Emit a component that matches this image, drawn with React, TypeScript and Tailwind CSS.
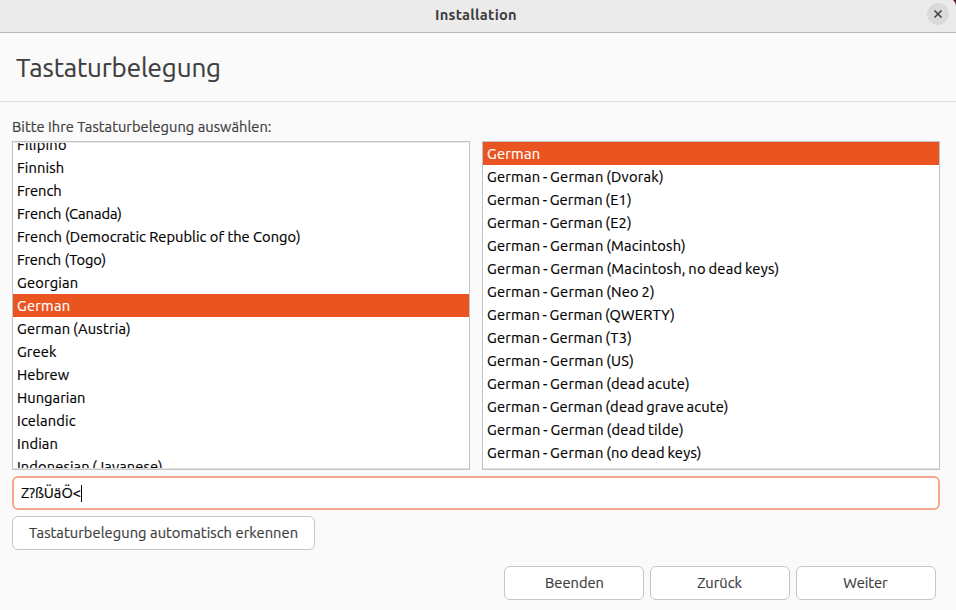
type Row = { label: string; fit?: string; selected?: boolean };

const layouts: Row[] = [
  { label: "Filipino", fit: "tracking-[0.25px]" },
  { label: "Finnish", fit: "tracking-[0.15px]" },
  { label: "French" },
  { label: "French (Canada)", fit: "tracking-[-0.03px]" },
  { label: "French (Democratic Republic of the Congo)", fit: "tracking-[0.03px]" },
  { label: "French (Togo)", fit: "tracking-[-0.08px]" },
  { label: "Georgian", fit: "tracking-[0.2px]" },
  { label: "German", fit: "tracking-[0.25px]", selected: true },
  { label: "German (Austria)", fit: "tracking-[0.25px] [word-spacing:-1px]" },
  { label: "Greek", fit: "tracking-[0.15px]" },
  { label: "Hebrew", fit: "tracking-[0.05px]" },
  { label: "Hungarian", fit: "tracking-[0.05px]" },
  { label: "Icelandic", fit: "tracking-[0.15px]" },
  { label: "Indian", fit: "tracking-[0.15px]" },
  { label: "Indonesian (Javanese)", fit: "tracking-[0.12px] [word-spacing:-1px]" },
];

const variantFit = "tracking-[0.25px] [word-spacing:-1px]";

const variants: Row[] = [
  { label: "German", fit: "tracking-[0.25px]", selected: true },
  { label: "German - German (Dvorak)", fit: variantFit },
  { label: "German - German (E1)", fit: "tracking-[0.2px] [word-spacing:-1px]" },
  { label: "German - German (E2)", fit: "tracking-[0.2px] [word-spacing:-1px]" },
  { label: "German - German (Macintosh)", fit: variantFit },
  { label: "German - German (Macintosh, no dead keys)", fit: "tracking-[0.27px] [word-spacing:-1px]" },
  { label: "German - German (Neo 2)", fit: variantFit },
  { label: "German - German (QWERTY)", fit: "tracking-[0.18px] [word-spacing:-1px]" },
  { label: "German - German (T3)", fit: "tracking-[0.2px] [word-spacing:-1px]" },
  { label: "German - German (US)", fit: variantFit },
  { label: "German - German (dead acute)", fit: variantFit },
  { label: "German - German (dead grave acute)", fit: "tracking-[0.2px] [word-spacing:-1px]" },
  { label: "German - German (dead tilde)", fit: "tracking-[0.28px] [word-spacing:-1px]" },
  { label: "German - German (no dead keys)", fit: variantFit },
];

function ListBox({ rows, scrolled }: { rows: Row[]; scrolled?: boolean }) {
  return (
    <div className="relative h-[329px] w-[458px] overflow-hidden border border-[#c3c3c3] bg-white">
      <ul className={scrolled ? "-mt-[9px]" : ""}>
        {rows.map((row) => (
          <li
            key={row.label}
            className={`h-[23px] pl-1 leading-[23px] whitespace-pre ${row.selected ? "bg-[#e95420] text-white" : "text-black"}`}
          >
            <span className={row.fit ?? ""}>{row.label}</span>
          </li>
        ))}
      </ul>
      {scrolled && <div className="absolute inset-x-0 top-0 h-px bg-[#e8e8e8]" />}
      <div className="absolute inset-x-0 bottom-0 h-px bg-[#e3e3e3]" />
    </div>
  );
}

function Button({ label, size, fit = "" }: { label: string; size: string; fit?: string }) {
  return (
    <button className={`flex h-[34px] items-center justify-center rounded-md border border-[#c6c6c6] bg-white whitespace-nowrap ${size}`}>
      <span className={fit}>{label}</span>
    </button>
  );
}

export default function App() {
  return (
    <div className="flex h-[610px] w-[956px] flex-col overflow-hidden bg-[#fafafa] font-['Ubuntu','Noto_Sans',sans-serif] text-[14.667px] text-[#3d3d3d] [-webkit-text-stroke:0.2px]">
      <header className="relative flex h-[33px] shrink-0 items-center justify-center border-b border-[#b8b8b8] bg-[#ebebeb] pb-[3px]">
        <h1 className="pr-1 font-bold tracking-[0.25px] [-webkit-text-stroke:0px]">Installation</h1>
        <button className="absolute top-[3px] right-[7px] flex size-[22px] items-center justify-center rounded-full bg-[#dadada]" aria-label="Schließen">
          <svg className="size-2" viewBox="0 0 8 8" fill="none" stroke="#3d3d3d" strokeWidth="1.5">
            <path d="M.5.5l7 7M7.5.5l-7 7" />
          </svg>
        </button>
        <svg className="absolute top-0 right-0 h-[5px] w-[3px]" viewBox="0 0 3 5">
          <path d="M0 0h3v5Q2.4 2 0 0" fill="#4f1a35" />
        </svg>
      </header>
      <section className="flex h-[69px] shrink-0 items-center border-b border-[#dedede] pl-4">
        <h2 className="text-[26px] tracking-[-0.12px]">Tastaturbelegung</h2>
      </section>
      <main className="flex flex-col px-3">
        <p className="mt-[13px] h-[26px] leading-[23px] tracking-[0.03px]">Bitte Ihre Tastaturbelegung auswählen:</p>
        <div className="flex gap-3">
          <ListBox rows={layouts} scrolled />
          <ListBox rows={variants} />
        </div>
        <div className="mt-1.5 flex h-[34px] w-[928px] items-center rounded-md border-2 border-[#f4a68e] bg-white pl-[7px] text-black">
          <span>Z?ßÜäÖ&lt;</span>
          <span className="h-[17px] w-px bg-black" />
        </div>
        <div className="mt-1.5 flex">
          <Button label="Tastaturbelegung automatisch erkennen" size="w-[303px]" fit="tracking-[0.07px]" />
        </div>
      </main>
      <footer className="mt-4 flex justify-end gap-1.5 pr-5">
        <Button label="Beenden" size="w-[140px]" fit="pl-px" />
        <Button label="Zurück" size="w-[140px]" fit="pr-px" />
        <Button label="Weiter" size="w-[140px]" fit="pr-px" />
      </footer>
    </div>
  );
}
